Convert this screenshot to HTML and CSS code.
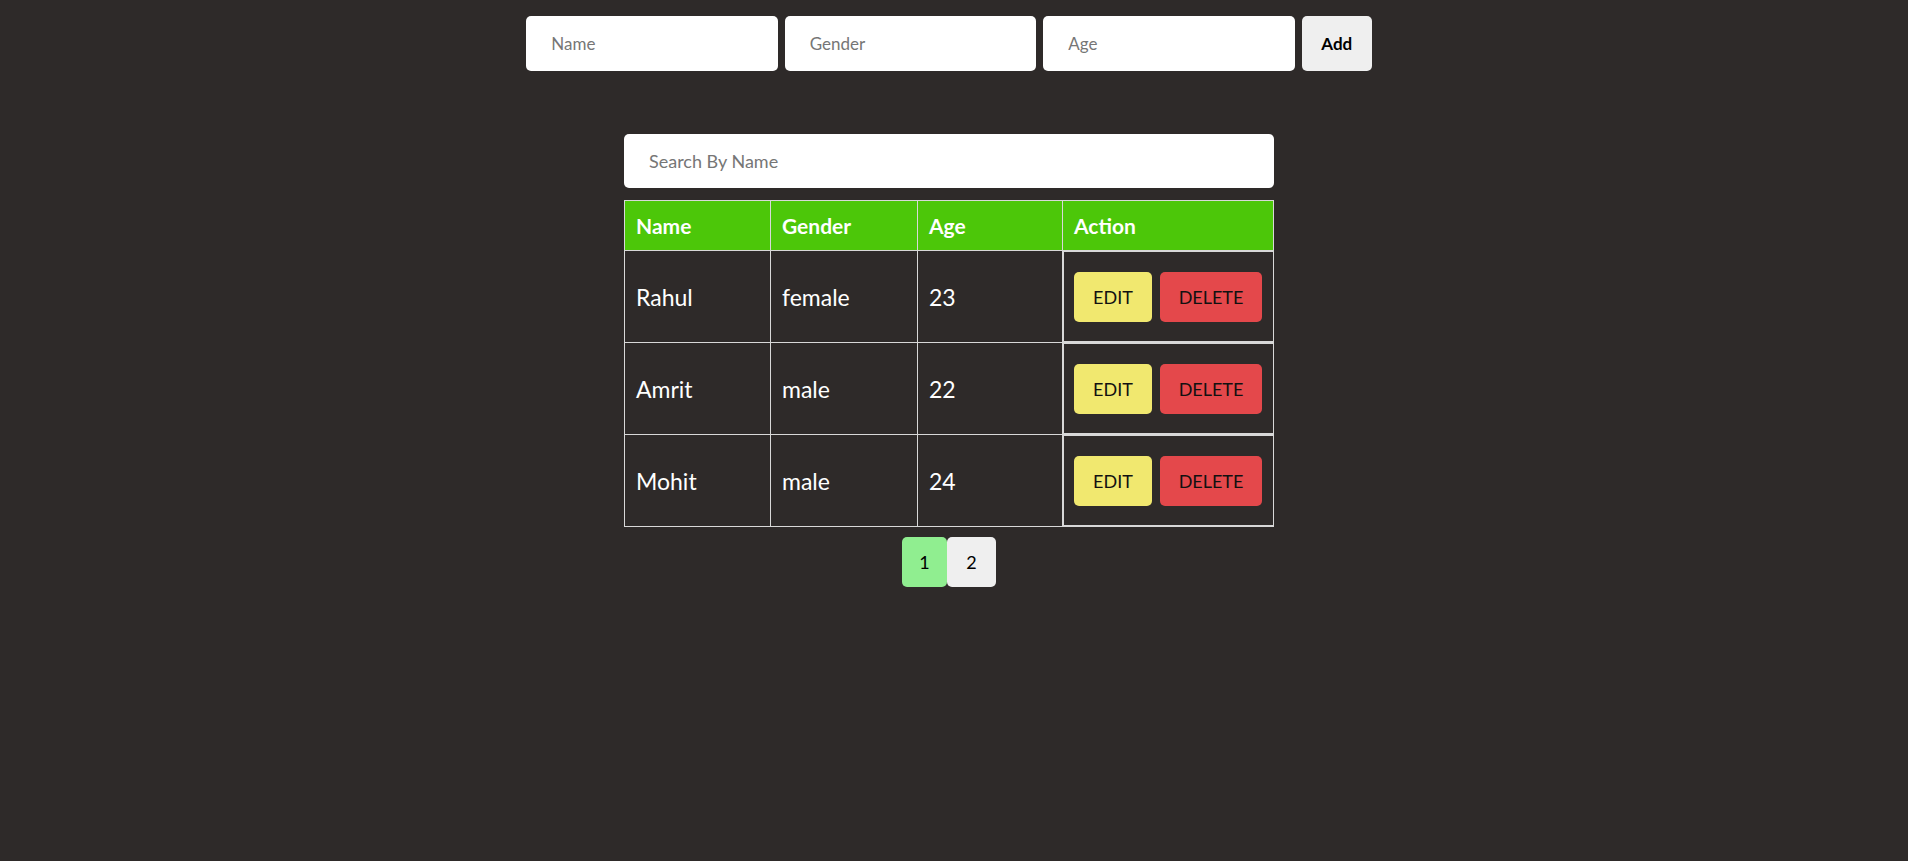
FILE: index.html
```html
<!DOCTYPE html>
<html lang="en">
<head>
<meta charset="utf-8">
<title>Users</title>
<link rel="stylesheet" href="styles.css">
</head>
<body>
<div class="app">
  <form class="add-form">
    <input class="field" type="text" placeholder="Name">
    <input class="field" type="text" placeholder="Gender">
    <input class="field" type="text" placeholder="Age">
    <button class="add-btn" type="button">Add</button>
  </form>

  <div class="list">
    <input class="search" type="text" placeholder="Search By Name">
    <table class="users">
      <colgroup>
        <col class="c-name"><col class="c-gender"><col class="c-age"><col class="c-action">
      </colgroup>
      <thead>
        <tr><th>Name</th><th>Gender</th><th>Age</th><th>Action</th></tr>
      </thead>
      <tbody>
        <tr>
          <td>Rahul</td><td>female</td><td>23</td>
          <td class="actions"><div class="box"><button class="btn edit">EDIT</button><button class="btn delete">DELETE</button></div></td>
        </tr>
        <tr>
          <td>Amrit</td><td>male</td><td>22</td>
          <td class="actions"><div class="box"><button class="btn edit">EDIT</button><button class="btn delete">DELETE</button></div></td>
        </tr>
        <tr>
          <td>Mohit</td><td>male</td><td>24</td>
          <td class="actions"><div class="box"><button class="btn edit">EDIT</button><button class="btn delete">DELETE</button></div></td>
        </tr>
      </tbody>
    </table>
    <div class="pager">
      <button class="page active">1</button>
      <button class="page">2</button>
    </div>
  </div>
</div>
</body>
</html>
```
FILE: styles.css
```css
html, body {
  margin: 0;
  padding: 0;
  background: #2e2a29;
  font-family: Lato, "Liberation Sans", sans-serif;
}

.app {
  padding: 16px 10px 0 0;
}

.add-form {
  display: flex;
  justify-content: center;
  gap: 7px;
  margin: 0;
}

.field {
  width: 251.5px;
  height: 55px;
  box-sizing: border-box;
  border: none;
  border-radius: 5px;
  background: #fff;
  padding: 0 25px;
  font-family: inherit;
  font-size: 17px;
  color: #222;
  outline: none;
}

.field::placeholder,
.search::placeholder {
  color: #767676;
}

.add-btn {
  width: 70px;
  height: 55px;
  border: none;
  border-radius: 5px;
  background: #efefef;
  font-family: inherit;
  font-weight: 700;
  font-size: 17px;
  color: #000;
  padding: 0;
}

.list {
  width: 650px;
  margin: 63px auto 0;
}

.search {
  display: block;
  width: 650px;
  height: 54px;
  box-sizing: border-box;
  border: none;
  border-radius: 5px;
  background: #fff;
  padding: 0 25px;
  font-family: inherit;
  font-size: 18px;
  outline: none;
}

.users {
  margin-top: 12px;
  width: 649px;
  table-layout: fixed;
  border-collapse: collapse;
  color: #fff;
}

.c-name { width: 146px; }
.c-gender { width: 147px; }
.c-age { width: 145px; }
.c-action { width: 211px; }

.users th,
.users td {
  border: 1px solid #d8d8d8;
  text-align: left;
  padding: 0 11px;
}

.users th {
  background: #4cc709;
  height: 49px;
  font-size: 21px;
  font-weight: 700;
}

.users td {
  font-size: 23px;
}

.users td.actions {
  padding: 0;
  vertical-align: top;
  border-right: none;
}

.box {
  display: flex;
  gap: 8px;
  border: 1px solid #d8d8d8;
  padding: 20px 9px 19px 10px;
}

.btn {
  height: 50px;
  border: none;
  border-radius: 5px;
  font-family: inherit;
  font-size: 18px;
  color: #111;
  padding: 0;
}

.edit {
  width: 78px;
  background: #f1e86f;
}

.delete {
  width: 102px;
  background: #e4484b;
}

.pager {
  display: flex;
  justify-content: center;
  margin-top: 10px;
}

.page {
  width: 49px;
  height: 50px;
  border: none;
  border-radius: 5px;
  background: #efefef;
  font-family: inherit;
  font-size: 18px;
  color: #000;
  padding: 0;
}

.page.active {
  width: 45px;
  background: #90ee90;
}
```
